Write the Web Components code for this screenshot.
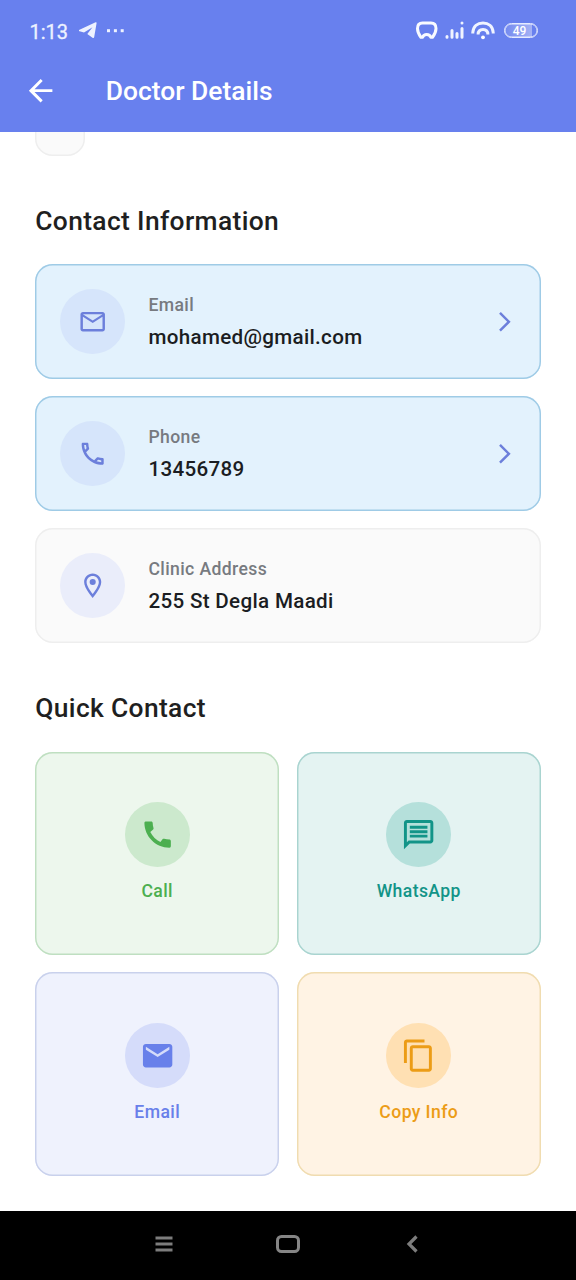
<!DOCTYPE html>
<html lang="en">
<head>
<meta charset="utf-8">
<title>Doctor Details</title>
<style>
html,body{margin:0;padding:0;background:#fff}
body{width:576px;height:1280px;overflow:hidden;font-family:Roboto,"Liberation Sans",sans-serif}
</style>
</head>
<body>
<doctor-screen></doctor-screen>
<script>
const ICONS = {
  back: '<path d="M20 11H7.83l5.59-5.59L12 4l-8 8 8 8 1.41-1.41L7.83 13H20v-2z"/>',
  mailOutline: '<path d="M20 4H4c-1.1 0-1.99.9-1.99 2L2 18c0 1.1.9 2 2 2h16c1.1 0 2-.9 2-2V6c0-1.1-.9-2-2-2zm0 14H4V8l8 5 8-5v10zm-8-7L4 6h16l-8 5z"/>',
  phoneOutline: '<path d="M6.54 5c.06.89.21 1.76.45 2.59l-1.2 1.2c-.41-1.2-.67-2.47-.76-3.79h1.51m9.86 12.02c.85.24 1.72.39 2.6.45v1.49c-1.32-.09-2.59-.35-3.8-.75l1.2-1.19M7.5 3H4c-.55 0-1 .45-1 1 0 9.39 7.61 17 17 17 .55 0 1-.45 1-1v-3.49c0-.55-.45-1-1-1-1.24 0-2.45-.2-3.57-.57-.1-.04-.21-.05-.31-.05-.26 0-.51.1-.71.29l-2.2 2.2c-2.83-1.45-5.15-3.76-6.59-6.59l2.2-2.2c.28-.28.36-.67.25-1.02C8.7 6.45 8.5 5.25 8.5 4c0-.55-.45-1-1-1z"/>',
  place: '<path d="M12 2C8.13 2 5 5.13 5 9c0 5.25 7 13 7 13s7-7.75 7-13c0-3.87-3.13-7-7-7zM7 9c0-2.76 2.24-5 5-5s5 2.24 5 5c0 2.88-2.88 7.19-5 9.88C9.92 16.21 7 11.85 7 9z"/><circle cx="12" cy="9" r="2.5"/>',
  forward: '<path d="M6.23 20.23 8 22l10-10L8 2 6.23 3.77 14.46 12z"/>',
  phone: '<path d="M20.01 15.38c-1.23 0-2.42-.2-3.53-.56-.35-.12-.74-.03-1.01.24l-1.57 1.97c-2.83-1.35-5.48-3.9-6.89-6.83l1.95-1.66c.27-.28.35-.67.24-1.02-.37-1.11-.56-2.3-.56-3.53 0-.54-.45-.99-.99-.99H4.19C3.65 3 3 3.24 3 3.99 3 13.28 10.73 21 20.01 21c.71 0 .99-.63.99-1.18v-3.45c0-.54-.45-.99-.99-.99z"/>',
  message: '<path d="M4 4h16v12H5.17L4 17.17V4m0-2c-1.1 0-1.99.9-1.99 2L2 22l4-4h14c1.1 0 2-.9 2-2V4c0-1.1-.9-2-2-2H4zm2 10h12v2H6v-2zm0-3h12v2H6V9zm0-3h12v2H6V6z"/>',
  mail: '<path d="M20 4H4c-1.1 0-1.99.9-1.99 2L2 18c0 1.1.9 2 2 2h16c1.1 0 2-.9 2-2V6c0-1.1-.9-2-2-2zm0 4-8 5-8-5V6l8 5 8-5v2z"/>',
  copy: '<path d="M16 1H4c-1.1 0-2 .9-2 2v14h2V3h12V1zm3 4H8c-1.1 0-2 .9-2 2v14c0 1.1.9 2 2 2h11c1.1 0 2-.9 2-2V7c0-1.1-.9-2-2-2zm0 16H8V7h11v14z"/>'
};
const define = (name, html) => customElements.define(name, class extends HTMLElement {
  constructor(){ super(); this.attachShadow({mode:'open'}).innerHTML = typeof html === 'function' ? html(this) : html; }
});

define('md-icon', el => `<style>:host{display:block;width:var(--size,29.4px);height:var(--size,29.4px);flex:none}svg{display:block;width:100%;height:100%;fill:currentColor}</style>
<svg viewBox="0 0 24 24">${ICONS[el.getAttribute('name')]}</svg>`);

define('status-bar', `<style>
:host{display:flex;align-items:center;height:61px;padding:0 38px 0 29.500px;box-sizing:border-box;color:#eef2ff}
.time{font-size:20px;line-height:24px;width:49px;padding-top:2px;-webkit-text-stroke:.3px currentColor}
.sp{flex:1}svg{display:block;flex:none}
.bat{box-sizing:border-box;width:34px;height:15px;border-radius:8px;border:1px solid #e6ebff;box-shadow:inset 0 0 0 .5px #e6ebff;font:500 12px/14px Roboto,sans-serif;padding-right:3px;text-align:center;background:linear-gradient(90deg,#7389ef 0,#a5b2f5 27px,transparent 27px);color:#fff}
</style>
<span class="time">1:13</span>
<svg width="18" height="17" viewBox="0 0 18 17" fill="currentColor"><path d="M0 8 16.6.3q1.1-.4 1 .8L15.200 15q-.3 1.600-1.700.7L8.300 11.900 13.500 5.300 5 10.400.6 9.200Q-.7 8.700 0 8z"/></svg>
<svg width="18" height="4" viewBox="0 0 18 4" fill="currentColor" style="margin-left:10px"><rect x="0" y=".2" width="3" height="3"/><rect x="6.900" y=".2" width="3" height="3"/><rect x="13.700" y=".2" width="3" height="3"/></svg>
<span class="sp"></span>
<svg width="22" height="19" viewBox="0 0 22 19" fill="none" stroke="#f8faff" stroke-width="3" stroke-linejoin="round"><path d="M6.500 2h8.500q5 0 5 5.500 0 4.200-3.500 8.800l-1.700-.1q-1-2.700-4.100-2.700t-4.100 2.700l-1.700.1Q1.500 11.700 1.500 7.500 1.500 2 6.500 2z"/></svg>
<svg width="19" height="19" viewBox="0 0 19 19" stroke="#f0f4ff" stroke-width="3" stroke-linecap="round" style="margin-left:7px"><path d="M2 15.500v.7M7 9.500v6.700M12 12.500v3.700M17 7.500v8.700M17 2v.1"/></svg>
<svg width="24" height="19" viewBox="0 0 24 19" fill="none" stroke="#f0f4ff" stroke-width="3" style="margin-left:7px"><path d="M1.800 12.500V11.500C2.300 5.200 6.500 1.900 12 1.900S21.700 5.200 22.200 11.500v1"/><path d="M7.100 13.500q0-5 4.900-5t4.900 5"/><circle cx="12" cy="16.300" r="1.900" fill="#fff" stroke="none"/></svg>
<span class="bat" style="margin-left:9px">49</span>`);

define('app-bar', `<style>
:host{display:block;height:132px;background:#6880ee;position:relative;z-index:1}
.row{display:flex;align-items:center;height:60px;padding-left:23.300px;color:#fff;--size:35.250px}
h1{margin:0 0 0 47.200px;font-size:26.400px;font-weight:500;line-height:32px}
</style><status-bar></status-bar><div class="row"><md-icon name="back"></md-icon><h1><slot></slot></h1></div>`);

define('section-title', `<style>:host{display:block;font-size:26.400px;font-weight:500;line-height:32px;letter-spacing:.35px;color:#1f1f21}</style><slot></slot>`);

define('contact-card', el => `<style>
:host{display:flex;align-items:center;box-sizing:border-box;height:114.400px;padding:0 25px;border-radius:17.600px;background:#fafafa;box-shadow:inset 0 0 0 1.470px #eee;--chip:#eaedfa}
:host([active]){background:#e3f2fd;box-shadow:inset 0 0 0 1.470px #9fcbe6;--chip:#d6e5fb}
.chip{display:grid;place-items:center;width:64.700px;height:64.700px;border-radius:50%;background:var(--chip);color:#6c7fdb;flex:none}
.text{flex:1;margin-left:23.500px;padding-top:1.800px}
.label{font-size:17.600px;line-height:25px;font-weight:500;letter-spacing:.38px;color:#777a80}
.value{font-size:20.600px;line-height:29px;font-weight:500;letter-spacing:.32px;color:#1b1d22;margin-top:4.900px}
.fwd{--size:23.500px;color:#6c7fdb;margin-right:-.3px}
</style><div class="chip"><md-icon name="${el.getAttribute('icon')}"></md-icon></div>
<div class="text"><div class="label"><slot name="label"></slot></div><div class="value"><slot></slot></div></div>
${el.hasAttribute('active') ? '<md-icon class="fwd" name="forward"></md-icon>' : ''}`);

define('quick-action', el => `<style>
:host{display:flex;flex-direction:column;align-items:center;justify-content:center;box-sizing:border-box;height:203.300px;border-radius:17.600px;background:var(--bg);box-shadow:inset 0 0 0 1.470px var(--line);color:var(--fg)}
.chip{display:grid;place-items:center;width:64.700px;height:64.700px;border-radius:50%;background:var(--chip);--size:35.250px}
.label{margin-top:12.600px;font-size:17.600px;line-height:25px;font-weight:500;letter-spacing:.4px}
</style><div class="chip"><md-icon name="${el.getAttribute('icon')}"></md-icon></div><div class="label"><slot></slot></div>`);

define('system-nav', `<style>:host{display:grid;grid-template-columns:124px 124px 124px;justify-content:center;place-items:center;height:69px;background:#000;box-sizing:border-box;padding-bottom:3px}svg{display:block}</style>
<svg width="18" height="18" viewBox="0 0 18 18" stroke="#7d7d7d" stroke-width="3"><path d="M.5 3h17M.5 9h17M.5 15h17"/></svg>
<svg width="24" height="18" viewBox="0 0 24 18" fill="none" stroke="#858585" stroke-width="3"><rect x="1.500" y="1.500" width="21" height="15" rx="4"/></svg>
<svg width="12" height="18" viewBox="0 0 12 18" fill="none" stroke="#7d7d7d" stroke-width="3.200"><path d="M10.500 1.500 3 9l7.500 7.500"/></svg>`);

define('doctor-screen', `<style>
:host{display:flex;flex-direction:column;height:1280px;background:#fff}
main{flex:1;min-height:0;overflow:hidden;padding:0 35.250px}
.stub{width:50px;height:48px;margin-top:-24px;border-radius:17.600px;background:#fafafa;box-shadow:inset 0 0 0 1.470px #eee}
.t1{margin-top:49px}.t2{margin-top:49.700px}
.list{display:grid;gap:17.600px;margin-top:27.400px}
.grid{display:grid;grid-template-columns:1fr 1fr;gap:17.600px;margin-top:27.100px}
.call{--bg:#edf7ed;--line:#bfdfc1;--chip:#cce9cd;--fg:#4caf50}
.wa{--bg:#e4f3f2;--line:#a9d4d0;--chip:#b5e0db;--fg:#129488}
.mail{--bg:#eff2fd;--line:#c9d1ec;--chip:#d5dcfa;--fg:#6880ea}
.copy{--bg:#fff3e4;--line:#f0dcb0;--chip:#ffe0b3;--fg:#ec9c16}
</style>
<app-bar>Doctor Details</app-bar>
<main><div class="stub"></div>
<section-title class="t1">Contact Information</section-title>
<div class="list">
<contact-card active icon="mailOutline"><span slot="label">Email</span>mohamed@gmail.com</contact-card>
<contact-card active icon="phoneOutline"><span slot="label">Phone</span>13456789</contact-card>
<contact-card icon="place"><span slot="label">Clinic Address</span>255 St Degla Maadi</contact-card>
</div>
<section-title class="t2">Quick Contact</section-title>
<div class="grid">
<quick-action class="call" icon="phone">Call</quick-action>
<quick-action class="wa" icon="message">WhatsApp</quick-action>
<quick-action class="mail" icon="mail">Email</quick-action>
<quick-action class="copy" icon="copy">Copy Info</quick-action>
</div></main>
<system-nav></system-nav>`);
</script>
</body>
</html>
